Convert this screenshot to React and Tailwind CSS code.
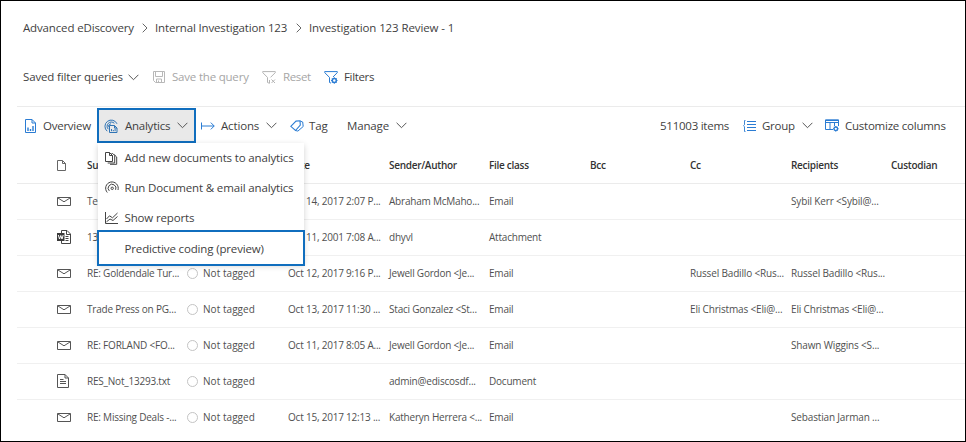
const BLUE = '#2b7cd3';

function Svg({ w = 14, h = 14, color = '#444', className = '', children }) {
  return (
    <svg
      width={w}
      height={h}
      viewBox={`0 0 ${w} ${h}`}
      fill="none"
      stroke={color}
      strokeWidth="1"
      className={`block shrink-0 ${className}`}
    >
      {children}
    </svg>
  );
}

const Chevron = () => (
  <Svg w={11} h={7} color="#555">
    <path d="M.6.8 5.5 5.7 10.4.8" />
  </Svg>
);

const Crumb = () => (
  <Svg w={6} h={10} color="#666">
    <path d="M.7.7 5 5 .7 9.3" />
  </Svg>
);

const SaveIcon = () => (
  <Svg w={12} h={12} color="#b8b8b8">
    <path d="M.5.5h11v11h-9l-2-2zM2.5.5v5h7v-5M3.5 11.500v-3.500h5v3.500M5.500 9.500v2" />
  </Svg>
);

const ResetIcon = () => (
  <Svg w={14} h={13} color="#b4b4b4">
    <path d="M.7.6h12.600v1L8.500 6.400M.7.6v1l4.800 4.800v5.100l2 .8V9M9.500 8.500l3.500 3.500M13 8.500 9.500 12" />
  </Svg>
);

const FilterIcon = () => (
  <Svg w={14} h={13} color={BLUE}>
    <path d="M.7.6h12.600v1L9 6M.7.6v1l4.800 4.800v5.100l1.500.6" />
    <circle cx="10.300" cy="9.500" r="2" strokeWidth="1.500" />
    <path d="M10.300 6.300v1M10.300 11.700v1M7.100 9.500h1M12.500 9.500h1M8 7.300l.8.8M12.600 11.800l-.8-.8M12.600 7.300l-.8.8M8 11.800l.8-.8" />
  </Svg>
);

const OverviewIcon = () => (
  <Svg w={11} h={14} color={BLUE}>
    <path d="M.5.5h6.500l3.500 3.500v9.500H.5zM7 .5V4h3.500" />
    <path d="M3 8.500V12M5.500 10V12M8 7V12" strokeWidth="1.400" />
  </Svg>
);

const AnalyticsIcon = () => (
  <Svg w={14} h={14} color="#2f74b5">
    <path d="M3.200 12.200A6.300 6.300 0 1 1 13 4.800M4.300 10.200A4.200 4.200 0 1 1 10.300 4.300M5 8.300A2.200 2.200 0 0 1 7 4.900" />
    <path d="M5.500 6.500h5l2.500 2.500v4.500h-7.500z" fill="#e9e9e9" />
    <path d="M7.500 10v2.200M9.300 11v1.200M11.100 9.500v2.700M10.500 6.500V9h2.500" />
  </Svg>
);

const ArrowIcon = () => (
  <Svg w={14} h={8} color={BLUE}>
    <path d="M.5.5v7M.5 4h12.700M9.800.6 13.200 4 9.800 7.400" />
  </Svg>
);

const TagIcon = () => (
  <Svg w={14} h={12} color={BLUE}>
    <path d="M.8 6.300 6 1.100l4-.3.300 4.200L5.500 10.500z" strokeWidth="1.100" />
    <path d="M10.200 1.100 12.700 2l.5 4.500-5.300 4.600-2.400-.6" />
  </Svg>
);

const GroupIcon = () => (
  <Svg w={13} h={12} color={BLUE}>
    <path d="M4 1.500h9M4 4.500h9M4 7.500h9M4 10.500h9" />
    <path d="M2.500.5h-1v4.300L.5 5.700l1 .9v4.900h1" strokeWidth=".9" />
  </Svg>
);

const ColumnsIcon = () => (
  <Svg w={14} h={13} color={BLUE}>
    <path d="M8 10.500H.5V.8h13V7M.5 3.500h13M5 3.500v7M9.500 3.500V7" />
    <path d="M.5 1.500h13" />
    <circle cx="10.800" cy="9.800" r="1.800" strokeWidth="1.300" />
    <path d="M10.800 7v1M10.800 11.600v1M8 9.800h1M12.600 9.800h1M8.900 7.900l.6.6M12.700 11.700l-.6-.6M12.700 7.900l-.6.6M8.900 11.700l.6-.6" />
  </Svg>
);

const PageIcon = () => (
  <Svg w={9} h={11} color="#666">
    <path d="M.5.5h5l3 3v7h-8zM5.500.5v3h3" />
  </Svg>
);

const MailIcon = () => (
  <Svg w={14} h={9} color="#555">
    <path d="M.5.5h13v8H.5zM.8.900 7 4.800 13.200.900" />
  </Svg>
);

const WordIcon = () => (
  <Svg w={14} h={14}>
    <path d="M4.500 3V.5h5.500L13.500 4v9.500h-9V11M9.500.5v4h4M8.500 6.500h3M8.500 8.500h3M8.500 10.500h3" />
    <path d="M0 3h7.500v8H0z" fill="#3a3a3a" stroke="none" />
    <path d="M1.300 5 2.500 9 3.750 5.500 5 9 6.200 5" stroke="#fff" />
  </Svg>
);

const TextIcon = () => (
  <Svg w={12} h={14} color="#555">
    <path d="M.5.5h7.500l3.500 3.500v9.500H.5zM8 .5V4h3.500M3 5.500h3.500M3 7.500h6M3 9.500h6" />
  </Svg>
);

const CopyIcon = () => (
  <Svg w={13} h={13}>
    <path d="M.5.5h4l3 3v6h-7zM4.500.5v3h3M6.500 1.500h1.200l2 2v7.500H2.700M9 2.500l2.700 2.500v7.300H5" />
  </Svg>
);

const RadarIcon = () => (
  <Svg w={14} h={14}>
    <path d="M2.300 11.500A6.300 6.300 0 1 1 13 9M4.300 9.900A3.900 3.900 0 1 1 10.600 8.800" />
    <circle cx="7.200" cy="7.300" r="1.200" />
  </Svg>
);

const ChartIcon = () => (
  <Svg w={13} h={12}>
    <path d="M.5 0v11.500H13M1.500 7 4.500 3.800l3 2L12.500 1M1.500 9.800 5 7l3 1.500 4.500-4" />
  </Svg>
);

const columns = [
  ['Date', 'w-[101px]'],
  ['Sender/Author', 'w-[100px]'],
  ['File class', 'w-[101px]'],
  ['Bcc', 'w-[100px]'],
  ['Cc', 'w-[101px]'],
  ['Recipients', 'w-[100px]'],
  ['Custodian', 'w-[70px]'],
];

const rows = [
  [MailIcon, 'Ter', '', 'Oct 14, 2017 2:07 P...', 'Abraham McMaho...', 'Email', '', 'Sybil Kerr <Sybil@...'],
  [WordIcon, '13', '', 'Oct 11, 2001 7:08 A...', 'dhyvl', 'Attachment', '', ''],
  [MailIcon, 'RE: Goldendale Tur...', 'Not tagged', 'Oct 12, 2017 9:16 P...', 'Jewell Gordon <Je...', 'Email', 'Russel Badillo <Rus...', 'Russel Badillo <Rus...'],
  [MailIcon, 'Trade Press on PG...', 'Not tagged', 'Oct 13, 2017 11:30 ...', 'Staci Gonzalez <St...', 'Email', 'Eli Christmas <Eli@...', 'Eli Christmas <Eli@...'],
  [MailIcon, 'RE: FORLAND <FO...', 'Not tagged', 'Oct 11, 2017 8:05 A...', 'Jewell Gordon <Je...', 'Email', '', 'Shawn Wiggins <S...'],
  [TextIcon, 'RES_Not_13293.txt', 'Not tagged', '', 'admin@ediscosdf...', 'Document', '', ''],
  [MailIcon, 'RE: Missing Deals -...', 'Not tagged', 'Oct 15, 2017 12:13 ...', 'Katheryn Herrera <...', 'Email', '', 'Sebastian Jarman ...'],
];

const menu = [
  [CopyIcon, 'Add new documents to analytics'],
  [RadarIcon, 'Run Document & email analytics'],
  [ChartIcon, 'Show reports'],
];

function Row({ data }) {
  const [Icon, subject, tag, date, sender, kind, cc, to] = data;
  return (
    <div className="flex h-9 items-center border-b border-[#f0f0f0] pb-px text-[10px] tracking-[-0.21px] text-[#505050] last:border-transparent">
      <div className="flex w-[70px] justify-start pl-10"><Icon /></div>
      <div className="w-[100px]">{subject}</div>
      <div className="flex w-[101px] items-center gap-[5px] tracking-[0.05px]">
        {tag && <span className="size-[11px] rounded-full border border-[#c4c4c4]" />}
        <span>{tag}</span>
      </div>
      <div className="w-[101px]">{date}</div>
      <div className="w-[100px]">{sender}</div>
      <div className="w-[101px]">{kind}</div>
      <div className="w-[100px]" />
      <div className="w-[101px] tracking-[-0.16px]">{cc}</div>
      <div className="w-[100px] tracking-[-0.16px]">{to}</div>
    </div>
  );
}

export default function App() {
  return (
    <div className="flex h-[442px] w-[966px] flex-col overflow-hidden whitespace-nowrap border border-black bg-white font-['Open_Sans','Noto_Sans',sans-serif] text-[11.500px] tracking-[-0.15px] text-[#3f3f3f]">
      <nav className="flex h-[54px] shrink-0 items-center pl-[22px]">
        <span className="w-[119px]">Advanced eDiscovery</span>
        <span className="w-[13px]"><Crumb /></span>
        <span className="w-[141px]">Internal Investigation 123</span>
        <span className="w-[13px]"><Crumb /></span>
        <span className="tracking-[-0.1px]">Investigation 123 Review - 1</span>
      </nav>

      <div className="flex h-[51px] shrink-0 items-center pb-[7px] pl-[22px]">
        <span className="w-[105px]">Saved filter queries</span>
        <span className="w-[25px]"><Chevron /></span>
        <span className="w-[19px]"><SaveIcon /></span>
        <span className="w-[90px] tracking-[-0.2px] text-[#a6a6a6]">Save the query</span>
        <span className="w-[21px]"><ResetIcon /></span>
        <span className="w-[41px] tracking-[-0.35px] text-[#a6a6a6]">Reset</span>
        <span className="w-5"><FilterIcon /></span>
        <span className="tracking-[-0.35px]">Filters</span>
      </div>

      <div className="ml-4 flex h-[38px] shrink-0 items-center border-t border-[#ebebeb]">
        <span className="w-[18px] pl-2"><OverviewIcon /></span>
        <span className="w-[62px] pl-2 tracking-[-0.25px]">Overview</span>
        <div className="relative flex h-[35px] w-[99px] items-center border-2 border-[#106ebe] bg-[#e9e9e9] pl-[5px]">
          <span className="w-5"><AnalyticsIcon /></span>
          <span className="w-[53px] pl-px tracking-[-0.25px]">Analytics</span>
          <Chevron />
          <div className="absolute -left-px top-[33px] z-10 h-[121px] w-[206px] bg-white shadow-[0_2px_6px_rgba(0,0,0,0.18)]">
            {menu.map(([Icon, label]) => (
              <div key={label} className="flex h-[30px] items-center pl-[7px]">
                <span className="w-[19.500px]"><Icon /></span>
                <span>{label}</span>
              </div>
            ))}
            <div className="-ml-px -mt-[3px] flex h-9 w-[208px] items-center border-2 border-[#106ebe] pl-[25.500px] pt-px">
              Predictive coding (preview)
            </div>
          </div>
        </div>
        <span className="w-[25px] pl-[5px]"><ArrowIcon /></span>
        <span className="w-[45px]">Actions</span>
        <span className="w-6"><Chevron /></span>
        <span className="w-[19px]"><TagIcon /></span>
        <span className="w-[38px]">Tag</span>
        <span className="w-[49px]">Manage</span>
        <span className="w-[264px]"><Chevron /></span>
        <span className="w-[83px] tracking-[-0.25px]">511003 items</span>
        <span className="w-[19px]"><GroupIcon /></span>
        <span className="w-10 tracking-[-0.25px]">Group</span>
        <span className="w-[23px]"><Chevron /></span>
        <span className="w-5"><ColumnsIcon /></span>
        <span className="tracking-[-0.24px]">Customize columns</span>
      </div>

      <div className="ml-4 flex h-10 shrink-0 items-center border-b border-[#ebebeb] pt-1 text-[10px] font-semibold tracking-[-0.28px] text-[#333]">
        <div className="w-[70px] pl-10"><PageIcon /></div>
        <div className="w-[100px]">Su</div>
        <div className="w-[101px]" />
        {columns.map(([name, width]) => (
          <div key={name} className={width}>{name}</div>
        ))}
      </div>

      <div className="ml-4 shrink-0">
        {rows.map((r) => <Row key={r[1]} data={r} />)}
      </div>
    </div>
  );
}
